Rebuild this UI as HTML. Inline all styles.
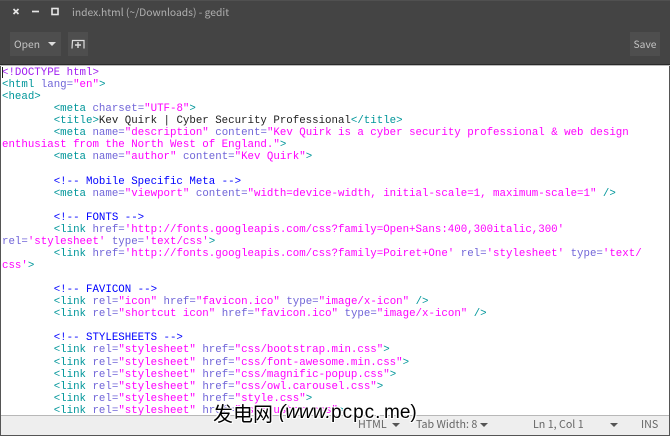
<!DOCTYPE html>
<html lang="zh"><head><meta charset="utf-8"><title>gedit</title>
<style>
html,body{margin:0;padding:0;width:670px;height:436px;overflow:hidden;background:#fff}
body{position:relative;font-family:"Noto Sans CJK SC","DejaVu Sans",sans-serif}
.a{position:absolute}
#hd{left:0;top:0;width:670px;height:65px;background:#444;border-top:1px solid #505050;box-sizing:border-box;border-bottom:1px solid #2a2a2a}
#sep{left:0;top:65px;width:670px;height:1px;background:#bbb}
.btn{background:#4e4e4e;top:32px;height:24px;color:#c4c4c4;font-size:10.3px;line-height:24px;text-align:center}
#title{left:72px;top:4px;font-size:10.3px;line-height:16px;color:#b0b0b0;white-space:nowrap}
pre{position:absolute;left:2px;top:65px;margin:2px 0 0;font:10.78px/12.07px "Liberation Mono",monospace;color:#222;white-space:pre;tab-size:8}
pre i{font-style:normal;color:#00969a}
pre b{font-weight:normal;color:#7165d8}
pre s{text-decoration:none;color:#ff00ff}
pre u{text-decoration:none;color:#0000ff}
pre em{font-style:normal;color:#a020f0}
#sb{left:0;top:415px;width:670px;height:21px;background:#eee;border-top:1px solid #b8b8b8;border-bottom:1px solid #555;box-sizing:border-box}
.st{top:416px;font-size:10.7px;line-height:18px;color:#666;white-space:nowrap}
.tri{width:0;height:0;border-left:4px solid transparent;border-right:4px solid transparent;border-top:4px solid #555}
#lb{left:0;top:66px;width:1px;height:370px;background:#555}
#rb{left:669px;top:66px;width:1px;height:370px;background:#555}
.wm{top:401px;color:#000;white-space:nowrap;text-shadow:-1px 0 #fff,1px 0 #fff,0 -1px #fff,0 1px #fff,-1px -1px #fff,1px 1px #fff,1px -1px #fff,-1px 1px #fff}
.wc{font:20px/24px "Noto Sans CJK SC","WenQuanYi Zen Hei",sans-serif}
.wl{font:19px/24px "Liberation Sans",sans-serif;top:401px}
</style></head><body>
<div class="a" id="hd"></div>
<div class="a" id="sep"></div>
<svg class="a" style="left:0;top:0" width="70" height="24" viewBox="0 0 70 24">
<path d="M13.5 9l5 5M18.5 9l-5 5" stroke="#e6e6e6" stroke-width="1.7" fill="none"/>
<path d="M32 11.5h7" stroke="#e6e6e6" stroke-width="1.7" fill="none"/>
<rect x="52" y="8.5" width="6" height="6" stroke="#e6e6e6" stroke-width="1.6" fill="none"/>
</svg>
<div class="a" id="title">index.html (~/Downloads) - gedit</div>
<div class="a btn" style="left:10px;width:51px;text-align:left;text-indent:4px">Open</div>
<div class="a tri" style="left:48px;top:42px;border-top-color:#ddd"></div>
<div class="a btn" style="left:68px;width:20px"></div>
<svg class="a" style="left:68px;top:32px" width="20" height="24" viewBox="0 0 20 24">
<path d="M4 16.5L4.5 8.5H16V16.5" stroke="#ddd" stroke-width="1.2" fill="none"/>
<path d="M7 13h6M10 10v6" stroke="#ddd" stroke-width="1.4" fill="none"/>
</svg>
<div class="a btn" style="left:630px;width:30px">Save</div>

<pre><em>&lt;!DOCTYPE html&gt;</em>
<i>&lt;html</i> <b>lang=</b><s>"en"</s><i>&gt;</i>
<i>&lt;head&gt;</i>
	<i>&lt;meta</i> <b>charset=</b><s>"UTF-8"</s><i>&gt;</i>
	<i>&lt;title&gt;</i>Kev Quirk | Cyber Security Professional<i>&lt;/title&gt;</i>
	<i>&lt;meta</i> <b>name=</b><s>"description"</s> <b>content=</b><s>"Kev Quirk is a cyber security professional &amp; web design</s>
<s>enthusiast from the North West of England."</s><i>&gt;</i>
	<i>&lt;meta</i> <b>name=</b><s>"author"</s> <b>content=</b><s>"Kev Quirk"</s><i>&gt;</i>

	<u>&lt;!-- Mobile Specific Meta --&gt;</u>
	<i>&lt;meta</i> <b>name=</b><s>"viewport"</s> <b>content=</b><s>"width=device-width, initial-scale=1, maximum-scale=1"</s> <i>/&gt;</i>

	<u>&lt;!-- FONTS --&gt;</u>
	<i>&lt;link</i> <b>href=</b><s>'http://fonts.googleapis.com/css?family=Open+Sans:400,300italic,300'</s>
<b>rel=</b><s>'stylesheet'</s> <b>type=</b><s>'text/css'</s><i>&gt;</i>
	<i>&lt;link</i> <b>href=</b><s>'http://fonts.googleapis.com/css?family=Poiret+One'</s> <b>rel=</b><s>'stylesheet'</s> <b>type=</b><s>'text/</s>
<s>css'</s><i>&gt;</i>

	<u>&lt;!-- FAVICON --&gt;</u>
	<i>&lt;link</i> <b>rel=</b><s>"icon"</s> <b>href=</b><s>"favicon.ico"</s> <b>type=</b><s>"image/x-icon"</s> <i>/&gt;</i>
	<i>&lt;link</i> <b>rel=</b><s>"shortcut icon"</s> <b>href=</b><s>"favicon.ico"</s> <b>type=</b><s>"image/x-icon"</s> <i>/&gt;</i>

	<u>&lt;!-- STYLESHEETS --&gt;</u>
	<i>&lt;link</i> <b>rel=</b><s>"stylesheet"</s> <b>href=</b><s>"css/bootstrap.min.css"</s><i>&gt;</i>
	<i>&lt;link</i> <b>rel=</b><s>"stylesheet"</s> <b>href=</b><s>"css/font-awesome.min.css"</s><i>&gt;</i>
	<i>&lt;link</i> <b>rel=</b><s>"stylesheet"</s> <b>href=</b><s>"css/magnific-popup.css"</s><i>&gt;</i>
	<i>&lt;link</i> <b>rel=</b><s>"stylesheet"</s> <b>href=</b><s>"css/owl.carousel.css"</s><i>&gt;</i>
	<i>&lt;link</i> <b>rel=</b><s>"stylesheet"</s> <b>href=</b><s>"style.css"</s><i>&gt;</i>
	<i>&lt;link</i> <b>rel=</b><s>"stylesheet"</s> <b>href=</b><s>"css/custom.css"</s><i>&gt;</i></pre>
<div class="a" style="left:2px;top:67px;width:1px;height:11px;background:#222"></div>
<div class="a" id="sb"></div>
<div class="a" id="lb"></div><div class="a" id="rb"></div>
<div class="a st" style="left:358px">HTML</div>
<div class="a tri" style="left:392px;top:423px"></div>
<div class="a st" style="left:416px">Tab Width: 8</div>
<div class="a tri" style="left:480px;top:423px"></div>
<div class="a st" style="left:533px">Ln 1, Col 1</div>
<div class="a tri" style="left:610px;top:423px"></div>
<div class="a st" style="left:641px">INS</div>
<div class="a wm wc" style="left:213px">发电网</div>
<div class="a wm wl" style="left:279px;font-style:italic">(www.</div>
<div class="a wm wl" style="left:331px;letter-spacing:1px">pcpc.</div>
<div class="a wm wl" style="left:384px">me)</div>
</body></html>
